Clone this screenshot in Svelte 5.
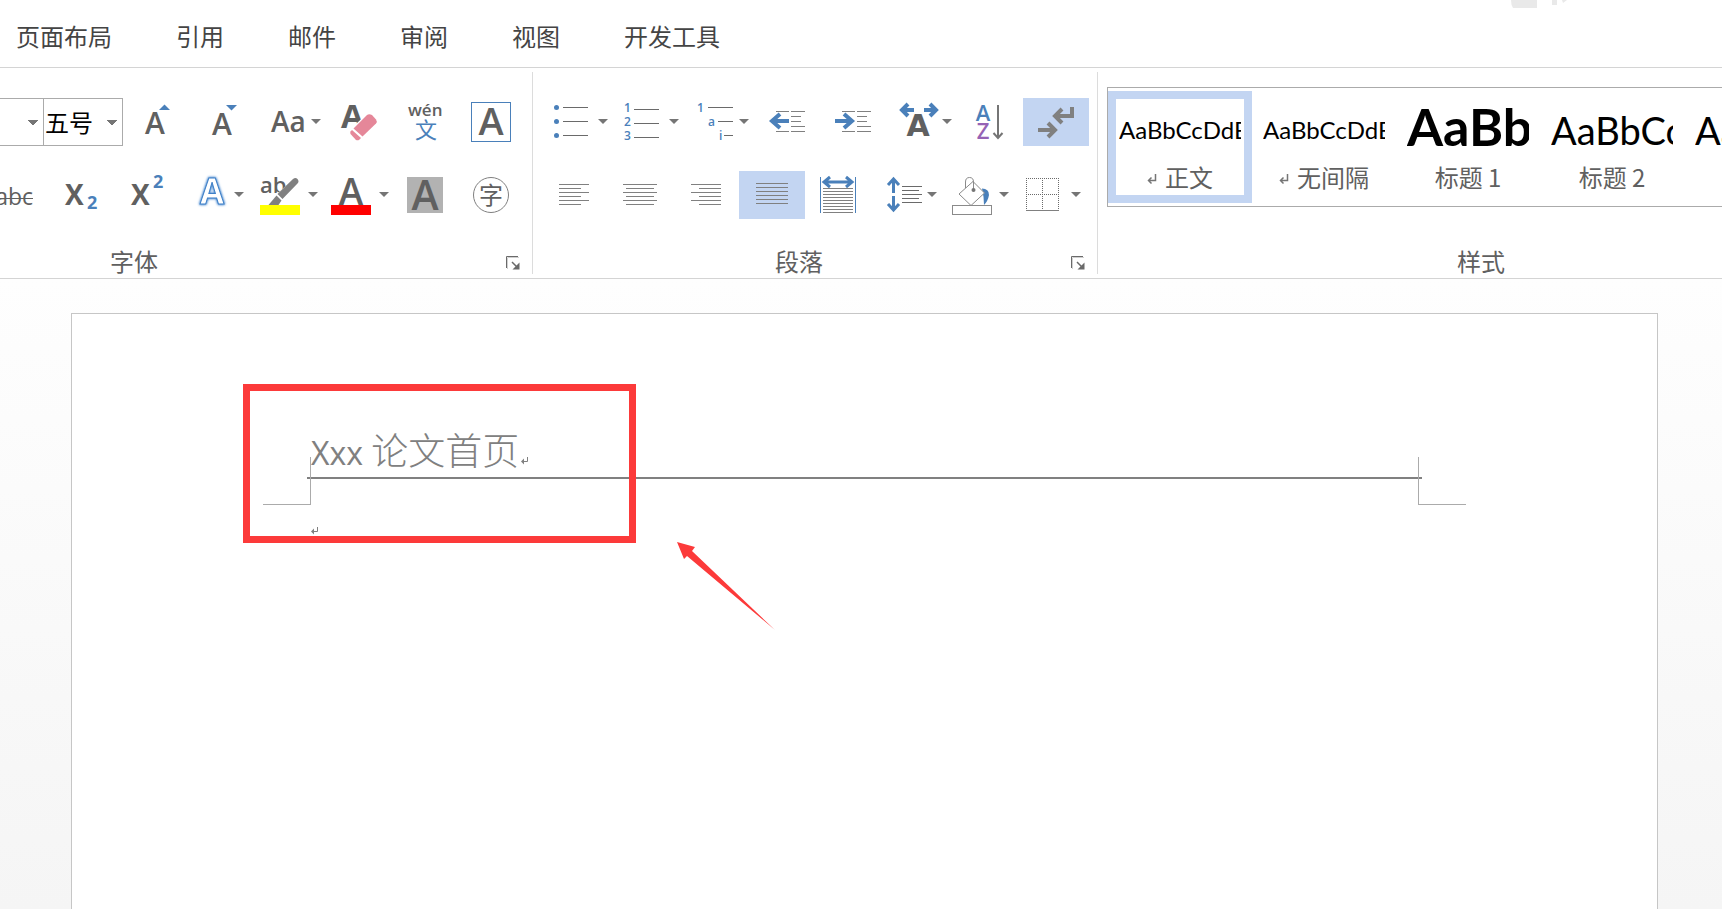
<script lang="ts">
  const tabs = ['页面布局', '引用', '邮件', '审阅', '视图', '开发工具'];

  const styles = [
    { name: '正文', sample: 'AaBbCcDdEe', kind: 'body', mark: true },
    { name: '无间隔', sample: 'AaBbCcDdEe', kind: 'body', mark: true },
    { name: '标题 1', sample: 'AaBbCc', kind: 'heading1', mark: false },
    { name: '标题 2', sample: 'AaBbCcDd', kind: 'heading2', mark: false },
    { name: '标题', sample: 'AaBbCcDd', kind: 'heading2', mark: false }
  ];

  const alignRows = [13, 17, 21, 25, 29, 33];
  const distributeRows = [17, 20, 23, 26, 29, 32, 35, 38, 41];

  let align = $state('justify');
  let showMarks = $state(true);
  let currentStyle = $state('正文');
</script>

{#snippet caret(x: number)}
  <path class="caret" d="M{x} 21h10l-5 5z" />
{/snippet}

{#snippet alignIcon(long: number[], short: number[], top: number)}
  <svg width="66" height="48" viewBox="0 0 66 48" aria-hidden="true">
    {#each alignRows as y, i}
      {@const span = i % 2 ? short : long}
      <path class="line" d="M{span[0]} {y + top}.5H{span[1]}" />
    {/each}
  </svg>
{/snippet}

{#snippet indentLines()}
  <path class="line" d="M22 13.5h13M37 13.5h14M37 18.5h10M37 23.5h10M37 28.5h14M22 33.5h13M37 33.5h14" />
{/snippet}

{#snippet returnMark()}
  <svg class="return" width="10" height="12" viewBox="0 0 10 12" aria-hidden="true">
    <path d="M8.5 1v6.5H1.500M4.500 4.500l-3 3 3 3" />
  </svg>
{/snippet}

{#snippet paragraphMark()}
  <svg class="para-mark" width="8" height="8" viewBox="0 0 8 8" aria-hidden="true">
    <path d="M6.500 0v4.500H1" />
    <path d="M0 4.500l3-3v6z" class="tip" />
  </svg>
{/snippet}

{#snippet launcher(label: string)}
  <button class="launcher" aria-label={label}>
    <svg width="14" height="14" viewBox="0 0 14 14" aria-hidden="true">
      <path d="M.5 12V.5H12" stroke="#6a6a6a" fill="none" />
      <path d="M1.500 13V1.500M13 1.500h-11" stroke="#d0d0d0" fill="none" />
      <path d="M6 6l5 5" stroke="#6a6a6a" stroke-width="1.500" />
      <path d="M13.500 6.500v7h-7z" fill="#6a6a6a" />
    </svg>
  </button>
{/snippet}

<div class="app">
  <nav class="tabs" aria-label="功能区">
    {#each tabs as tab}
      <button class="tab">{tab}</button>
    {/each}
    <svg class="corner" width="60" height="9" viewBox="0 0 60 9" aria-hidden="true">
      <path d="M1 0h26v8H3q-2-3-2-8zM42 0h5v5h-5zM52 0h5l-4 3z" fill="#e9e9e9" />
    </svg>
  </nav>

  <div class="ribbon">
    <section class="group font" aria-label="字体">
      <div class="row">
        <select class="family" aria-label="字体名称"><option></option></select>
        <select class="size" aria-label="字号"><option>五号</option></select>
        <button class="tool" aria-label="增大字号">
          <svg width="66" height="48" viewBox="0 0 66 48">
            <text x="22" y="36" font-size="30">A</text>
            <path class="blue" d="M36 12h11l-5.500-5.500z" />
          </svg>
        </button>
        <button class="tool" aria-label="减小字号">
          <svg width="66" height="48" viewBox="0 0 66 48">
            <text x="23" y="37" font-size="30">A</text>
            <path class="blue" d="M37 7h11l-5.500 5.500z" />
          </svg>
        </button>
        <button class="tool" aria-label="更改大小写">
          <svg width="72" height="48" viewBox="0 0 72 48">
            <text x="16" y="34" font-size="28">Aa</text>
            {@render caret(56)}
          </svg>
        </button>
        <button class="tool" aria-label="清除格式">
          <svg width="66" height="48" viewBox="0 0 66 48">
            <text class="bold" x="14" y="30" font-size="33">A</text>
            <path d="M23 33L41 16l9 8-20 19z" fill="#fff" stroke="#fff" stroke-width="2" />
            <path class="rubber" d="M26.500 30.500L40 17q2-1.500 5 0l4 4.500q1.500 2 0 4L35.500 38.500z" />
            <path class="rubber" d="M25 32l9 8-2 2q-1.500.5-3 0l-5.500-6q-.5-1.500 0-2.500z" />
          </svg>
        </button>
        <button class="tool" aria-label="拼音指南">
          <svg width="66" height="48" viewBox="0 0 66 48">
            <text x="15" y="18" font-size="17">wén</text>
            <text class="blue cjk" x="22" y="40" font-size="22">文</text>
          </svg>
        </button>
        <button class="tool" aria-label="字符边框">
          <svg width="66" height="48" viewBox="0 0 66 48">
            <rect x="12.500" y="4.500" width="39" height="39" fill="none" stroke="#4a80ba" />
            <text x="32" y="37" font-size="38" text-anchor="middle">A</text>
          </svg>
        </button>
      </div>

      <div class="row">
        <button class="tool" aria-label="删除线">
          <svg width="48" height="48" viewBox="0 0 48 48">
            <text class="regular" x="33" y="34" font-size="23" text-anchor="end">abc</text>
            <path d="M0 27.500h33" stroke="#606060" />
          </svg>
        </button>
        <button class="tool" aria-label="下标">
          <svg width="66" height="48" viewBox="0 0 66 48">
            <text class="bold" x="17" y="34" font-size="28">X</text>
            <text class="bold blue" x="39" y="38" font-size="18">2</text>
          </svg>
        </button>
        <button class="tool" aria-label="上标">
          <svg width="66" height="48" viewBox="0 0 66 48">
            <text class="bold" x="17" y="34" font-size="28">X</text>
            <text class="bold blue" x="39" y="17" font-size="18">2</text>
          </svg>
        </button>
        <button class="tool" aria-label="文本效果">
          <svg width="71" height="48" viewBox="0 0 71 48">
            <text class="glow" x="20" y="33" font-size="35">A</text>
            {@render caret(54)}
          </svg>
        </button>
        <button class="tool" aria-label="突出显示颜色">
          <svg width="71" height="48" viewBox="0 0 71 48">
            <text x="9" y="22" font-size="22">ab</text>
            <path d="M44 8l5 4-20 21-5-7z" fill="#fff" stroke="#fff" stroke-width="2" />
            <path d="M42 8q2.500-2 4.500 0 2 2.500 0 4.500L31.500 28 26.500 23z" fill="#808080" />
            <path d="M25.500 24.500l5 5-3 4.500h-10z" fill="#808080" />
            <rect x="9" y="34" width="40" height="10" fill="#ffff00" />
            {@render caret(57)}
          </svg>
        </button>
        <button class="tool" aria-label="字体颜色">
          <svg width="71" height="48" viewBox="0 0 71 48">
            <text x="29" y="34" font-size="37" text-anchor="middle">A</text>
            <rect x="9" y="34" width="40" height="10" fill="#ff0000" />
            {@render caret(57)}
          </svg>
        </button>
        <button class="tool" aria-label="字符底纹">
          <svg width="66" height="48" viewBox="0 0 66 48">
            <rect x="14" y="6" width="36" height="36" fill="#b2b2b2" />
            <text x="32" y="39" font-size="41" text-anchor="middle">A</text>
          </svg>
        </button>
        <button class="tool" aria-label="带圈字符">
          <svg width="66" height="48" viewBox="0 0 66 48">
            <circle cx="32" cy="24" r="17.500" fill="none" stroke="#808080" />
            <text class="cjk" x="32" y="33" font-size="24" text-anchor="middle">字</text>
          </svg>
        </button>
      </div>

      <footer><span>字体</span>{@render launcher('字体设置')}</footer>
    </section>

    <section class="group paragraph" aria-label="段落">
      <div class="row">
        <button class="tool" aria-label="项目符号">
          <svg width="71" height="48" viewBox="0 0 71 48">
            {#each [9, 23, 37] as y}
              <circle class="blue" cx="15.500" cy={y + 0.5} r="2.500" />
              <path class="line dark" d="M22 {y}.5h25" />
            {/each}
            {@render caret(57)}
          </svg>
        </button>
        <button class="tool" aria-label="编号">
          <svg width="71" height="48" viewBox="0 0 71 48">
            {#each [14, 28, 42] as y, i}
              <text class="blue" x="12" {y} font-size="12">{i + 1}</text>
              <path class="line dark" d="M22 {y - 3}.5h25" />
            {/each}
            {@render caret(57)}
          </svg>
        </button>
        <button class="tool" aria-label="多级列表">
          <svg width="71" height="48" viewBox="0 0 71 48">
            <text class="blue" x="14" y="14" font-size="12">1</text>
            <text class="blue" x="25" y="28" font-size="12">a</text>
            <text class="blue" x="36" y="42" font-size="12">i</text>
            <path class="line dark" d="M25 9.500h25M35 23.500h15M41 37.500h9" />
            {@render caret(56)}
          </svg>
        </button>
        <button class="tool" aria-label="减少缩进量">
          <svg width="66" height="48" viewBox="0 0 66 48">
            <path class="arrow" d="M35 23H18M26 16l-8 7 8 7" />
            {@render indentLines()}
          </svg>
        </button>
        <button class="tool" aria-label="增加缩进量">
          <svg width="66" height="48" viewBox="0 0 66 48">
            <path class="arrow" d="M15 23h17M24 16l8 7-8 7" />
            {@render indentLines()}
          </svg>
        </button>
        <button class="tool" aria-label="中文版式">
          <svg width="71" height="48" viewBox="0 0 71 48">
            <path class="arrow" d="M28 12H16M22 6l-6 6 6 6M38 12h12M44 6l6 6-6 6" />
            <text class="wide" x="32" y="38" font-size="30" text-anchor="middle">A</text>
            {@render caret(56)}
          </svg>
        </button>
        <button class="tool" aria-label="排序">
          <svg width="66" height="48" viewBox="0 0 66 48">
            <text class="blue" x="26" y="23" font-size="22" text-anchor="middle">A</text>
            <text class="purple" x="26" y="41" font-size="22" text-anchor="middle">Z</text>
            <path d="M41 7v33M36.500 35l4.500 5 4.500-5" fill="none" stroke="#757575" stroke-width="2" />
          </svg>
        </button>
        <button
          class="tool"
          class:active={showMarks}
          aria-label="显示编辑标记"
          aria-pressed={showMarks}
          onclick={() => (showMarks = !showMarks)}
        >
          <svg width="66" height="48" viewBox="0 0 66 48">
            <path class="arrow gray" d="M49 9v9H32M39 11l-7 7 7 7M15 32h17M25 25l7 7-7 7" />
          </svg>
        </button>
      </div>

      <div class="row">
        <button class="tool" class:active={align === 'left'} aria-label="左对齐" onclick={() => (align = 'left')}>
          {@render alignIcon([18, 48], [18, 40], 0)}
        </button>
        <button class="tool" class:active={align === 'center'} aria-label="居中" onclick={() => (align = 'center')}>
          {@render alignIcon([16, 50], [19, 47], 0)}
        </button>
        <button class="tool" class:active={align === 'right'} aria-label="右对齐" onclick={() => (align = 'right')}>
          {@render alignIcon([18, 48], [26, 48], 0)}
        </button>
        <button class="tool" class:active={align === 'justify'} aria-label="两端对齐" onclick={() => (align = 'justify')}>
          {@render alignIcon([17, 49], [17, 49], -1)}
        </button>
        <button class="tool" aria-label="分散对齐">
          <svg width="66" height="48" viewBox="0 0 66 48">
            <path d="M15.500 6v36M50.500 6v36" stroke="#4a80ba" />
            <path class="arrow thin" d="M19 11h28M25 6l-6 5 6 5M41 6l6 5-6 5" />
            {#each distributeRows as y}
              <path class="line" d="M18 {y}.5h30" />
            {/each}
          </svg>
        </button>
        <button class="tool" aria-label="行距">
          <svg width="71" height="48" viewBox="0 0 71 48">
            <path class="arrow thin" d="M22.500 22V8M17 14l5.500-6 5.500 6M22.500 25v14M17 33l5.500 6 5.500-6" />
            <path class="line dark" d="M31 15.500h20M31 19.500h17M31 23.500h20M31 27.500h17M31 31.500h20" />
            {@render caret(56)}
          </svg>
        </button>
        <button class="tool" aria-label="底纹">
          <svg width="71" height="48" viewBox="0 0 71 48">
            <path class="blue" d="M40 17.500q7 0 7 6.500-1 6-5 10 0-8-2-16.500z" />
            <path class="outline" d="M31 10.500L42.500 22 29 34.500 17 23z" fill="#fff" />
            <path class="outline" d="M23.500 17v-6q0-4.500 4-4.500t4 4.500v8" fill="none" />
            <circle cx="31.500" cy="19" r="2" fill="#757575" />
            <rect class="outline" x="10.500" y="34.500" width="39" height="9" fill="#fff" />
            {@render caret(57)}
          </svg>
        </button>
        <button class="tool" aria-label="边框">
          <svg width="71" height="48" viewBox="0 0 71 48">
            <path
              d="M13 7.500h33M13 23.500h33M13.500 7v32M29.500 7v32M45.500 7v32"
              stroke="#6a6a6a"
              stroke-dasharray="1 1"
            />
            <path class="line" d="M13 39.500h33" />
            {@render caret(58)}
          </svg>
        </button>
      </div>

      <footer><span>段落</span>{@render launcher('段落设置')}</footer>
    </section>

    <section class="group styles" aria-label="样式">
      <div class="gallery">
        {#each styles as style}
          <button
            class="style-card"
            class:selected={style.name === currentStyle}
            onclick={() => (currentStyle = style.name)}
          >
            <span class="sample {style.kind}">{style.sample}</span>
            <span class="style-name">
              {#if style.mark}{@render returnMark()}{/if}
              {style.name}
            </span>
          </button>
        {/each}
      </div>
      <footer><span>样式</span></footer>
    </section>
  </div>

  <main class="workspace">
    <article class="page">
      <header class="page-header">
        <p class="header-text">Xxx <span class="zh">论文首页</span>{#if showMarks}{@render paragraphMark()}{/if}</p>
      </header>
      <div class="margins">
        <i class="crop left"></i>
        <i class="crop right"></i>
      </div>
      <p class="body-text">{#if showMarks}{@render paragraphMark()}{/if}</p>

      <div class="callout"></div>
      <svg class="pointer" width="100" height="90" viewBox="0 0 100 90" aria-hidden="true">
        <path d="M0 0l18 5-3 4 83 79-88-74-3 3z" fill="#fc3a3a" />
      </svg>
    </article>
  </main>
</div>

<style>
  :global(body) {
    margin: 0;
    background: #fff;
  }

  .app {
    display: flex;
    flex-direction: column;
    min-height: 100vh;
    overflow: hidden;
    font-family: 'Open Sans', 'Noto Sans CJK SC', sans-serif;
    font-size: 24px;
    color: #606060;
  }

  button,
  select {
    margin: 0;
    padding: 0;
    border: 0;
    border-radius: 0;
    background: none;
    font: inherit;
    color: inherit;
  }

  p {
    margin: 0;
  }

  /* tabs */
  .tabs {
    display: flex;
    gap: 64px;
    padding: 0 152px 0 16px;
    border-bottom: 1px solid #d4d4d4;
  }

  .tab {
    padding: 18px 0 13px;
    line-height: 36px;
    font-family: 'Noto Sans CJK SC', sans-serif;
    color: #444;
    white-space: nowrap;
  }

  .corner {
    margin-left: auto;
  }

  /* ribbon */
  .ribbon {
    display: flex;
    border-bottom: 1px solid #d4d4d4;
  }

  .group {
    display: flex;
    flex-direction: column;
    flex: none;
    box-sizing: border-box;
    margin: 4px 0;
    padding-top: 26px;
    border-right: 1px solid #dcdcdc;
  }

  .font {
    width: 533px;
  }

  .paragraph {
    width: 565px;
    padding-left: 8px;
  }

  .styles {
    flex: 1;
    min-width: 0;
    padding-top: 15px;
    padding-left: 9px;
    border-right: 0;
    overflow: hidden;
  }

  .row {
    display: flex;
    height: 48px;
    margin-bottom: 25px;
  }

  select {
    appearance: none;
    box-sizing: border-box;
    height: 48px;
    border: 1px solid #ababab;
    color: #000;
    background: conic-gradient(from -45deg at 50% 100%, #757575 90deg, transparent 0) no-repeat;
    background-size: 10px 5px;
    background-position: right 5px center;
  }

  .family {
    width: 43px;
    border-left: 0;
    border-right: 0;
  }

  .size {
    width: 80px;
    padding-left: 1px;
    font-family: 'Noto Sans CJK SC', sans-serif;
    line-height: 44px;
  }

  .tool {
    display: block;
    flex: none;
    height: 48px;
  }

  .tool:hover {
    background: #e3ecf9;
  }

  .tool svg {
    display: block;
  }

  .tool.active {
    background: #c3d5f2;
  }

  .tool text {
    font-family: 'Open Sans', sans-serif;
    font-weight: 600;
    fill: #606060;
  }

  .tool text.regular {
    font-weight: 400;
  }

  .tool text.bold {
    font-weight: 700;
  }

  .tool text.cjk {
    font-family: 'Noto Sans CJK SC', sans-serif;
    font-weight: 400;
  }

  .tool text.wide {
    font-family: 'DejaVu Sans', sans-serif;
    font-weight: 700;
  }

  .tool text.blue,
  .blue {
    fill: #4a80ba;
  }

  .tool text.purple {
    fill: #9563b5;
  }

  .tool text.glow {
    font-weight: 700;
    fill: #fff;
    stroke: #3f80c8;
    stroke-width: 1px;
    filter: drop-shadow(0 0 1px #4a88cc) drop-shadow(0 0 1px #8fb8e6);
  }

  .caret {
    fill: #757575;
  }

  .rubber {
    fill: #e58799;
  }

  .line {
    fill: none;
    stroke: #808080;
  }

  .line.dark {
    stroke: #6a6a6a;
  }

  .outline {
    stroke: #8a8a8a;
  }

  .arrow {
    fill: none;
    stroke: #4a80ba;
    stroke-width: 4;
  }

  .arrow.thin {
    stroke-width: 3;
  }

  .arrow.gray {
    stroke: #808080;
  }

  footer {
    display: flex;
    align-items: flex-start;
    height: 28px;
    margin-top: auto;
    line-height: 30px;
    font-family: 'Noto Sans CJK SC', sans-serif;
  }

  .row + footer {
    margin-top: 2px;
  }

  .font footer {
    padding-left: 110px;
  }

  .paragraph footer {
    padding-left: 234px;
  }

  .styles footer {
    padding-left: 350px;
  }

  .launcher {
    display: block;
    align-self: flex-end;
    height: 14px;
    margin: 0 12px 4px auto;
  }

  .launcher svg {
    display: block;
  }

  /* style gallery */
  .gallery {
    display: flex;
    padding: 3px 0;
    border: 1px solid #ababab;
    border-right: 0;
  }

  .style-card {
    display: flex;
    flex: none;
    flex-direction: column;
    align-items: center;
    justify-content: flex-start;
    box-sizing: border-box;
    width: 144px;
    height: 112px;
    border: 8px solid transparent;
  }

  .style-card.selected {
    border-color: #c3d5f2;
  }

  .sample {
    width: 122px;
    height: 62px;
    overflow: hidden;
    font-family: Lato, sans-serif;
    text-align: left;
    white-space: nowrap;
    color: #000;
  }

  .sample.body {
    font-size: 24px;
    line-height: 62px;
  }

  .sample.heading1 {
    font-size: 52px;
    font-weight: 700;
    line-height: 54px;
  }

  .sample.heading2 {
    font-size: 38px;
    line-height: 62px;
  }

  .style-name {
    display: flex;
    align-items: center;
    gap: 8px;
    line-height: 32px;
    font-family: 'Noto Sans CJK SC', sans-serif;
  }

  .return {
    margin-top: 4px;
  }

  .return path {
    fill: none;
    stroke: #757575;
    stroke-width: 1.500;
  }

  /* document */
  .workspace {
    display: flex;
    flex: 1;
    padding: 34px 64px 0 71px;
    background: linear-gradient(#fefefe, #f5f5f5);
  }

  .page {
    position: relative;
    flex: 1;
    padding: 112px 239px 0;
    border: 1px solid #c6c6c6;
    border-bottom: 0;
    background: #fff;
  }

  .page-header {
    margin: 0 -4px;
    padding: 0 4px;
    border-bottom: 2px solid #808080;
  }

  .header-text {
    height: 51px;
    line-height: 46px;
    font-size: 32px;
    font-weight: 500;
    color: #808080;
  }

  .header-text .zh {
    font-family: 'Noto Sans CJK SC', sans-serif;
    font-size: 37px;
    font-weight: 300;
  }

  .para-mark {
    margin-left: 2px;
  }

  .para-mark path {
    fill: none;
    stroke: #808080;
  }

  .para-mark .tip {
    fill: #808080;
    stroke: none;
  }

  .margins {
    display: flex;
    justify-content: space-between;
    height: 48px;
    margin: -22px -48px 0;
  }

  .crop {
    box-sizing: border-box;
    width: 48px;
    border-bottom: 1px solid #ababab;
  }

  .crop.left {
    border-right: 1px solid #ababab;
  }

  .crop.right {
    border-left: 1px solid #ababab;
  }

  .body-text {
    display: flex;
    margin-top: 22px;
  }

  .body-text .para-mark {
    margin-left: 0;
  }

  /* annotation over the page */
  .callout {
    position: absolute;
    top: 70px;
    left: 171px;
    box-sizing: border-box;
    width: 393px;
    height: 159px;
    border: 7px solid #fc3a3a;
  }

  .pointer {
    position: absolute;
    top: 228px;
    left: 605px;
  }
</style>
